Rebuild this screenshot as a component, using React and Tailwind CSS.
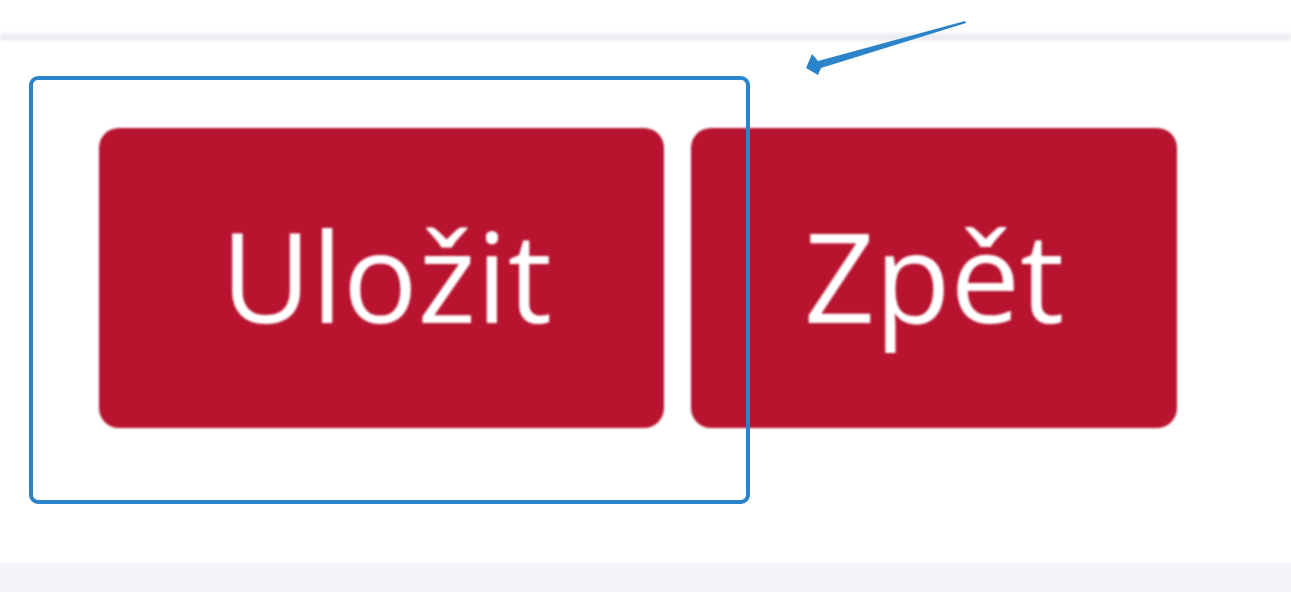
import React from "react";

export default function App() {
  return (
    <div className="relative w-[1291px] h-[592px] overflow-hidden bg-white flex flex-col" style={{ fontFamily: '"Open Sans", "Noto Sans", sans-serif' }}>
      <div className="h-[34px] bg-white" />
      <div className="h-[6px] bg-[#e6e8ec] blur-[2px]" />
      <div className="flex-1 bg-white pt-[88px] pl-[99px]">
        <div className="flex gap-[27px] blur-[1.2px]">
          <button className="w-[565px] h-[300px] rounded-[20px] bg-[#b81430] text-white text-[124px] font-medium tracking-[0.2px] leading-none flex items-center justify-center pb-[6px] pl-[10px]">
            Uložit
          </button>
          <button className="w-[486px] h-[300px] rounded-[20px] bg-[#b81430] text-white text-[124px] font-medium tracking-[-0.2px] leading-none flex items-center justify-center pb-[6px]">
            Zpět
          </button>
        </div>
      </div>
      <div className="h-[29px] bg-[#f4f5f8]" />

      <div className="absolute left-[29px] top-[76px] w-[721px] h-[428px] border-[4px] border-[#2b83c9] rounded-[9px]" />
      <svg className="absolute left-0 top-0" width="1291" height="592" viewBox="0 0 1291 592">
        <polygon points="965,21 818,61 812,54 806,68 818,75 821,68 966,23" fill="#2b83c9" />
      </svg>
    </div>
  );
}
